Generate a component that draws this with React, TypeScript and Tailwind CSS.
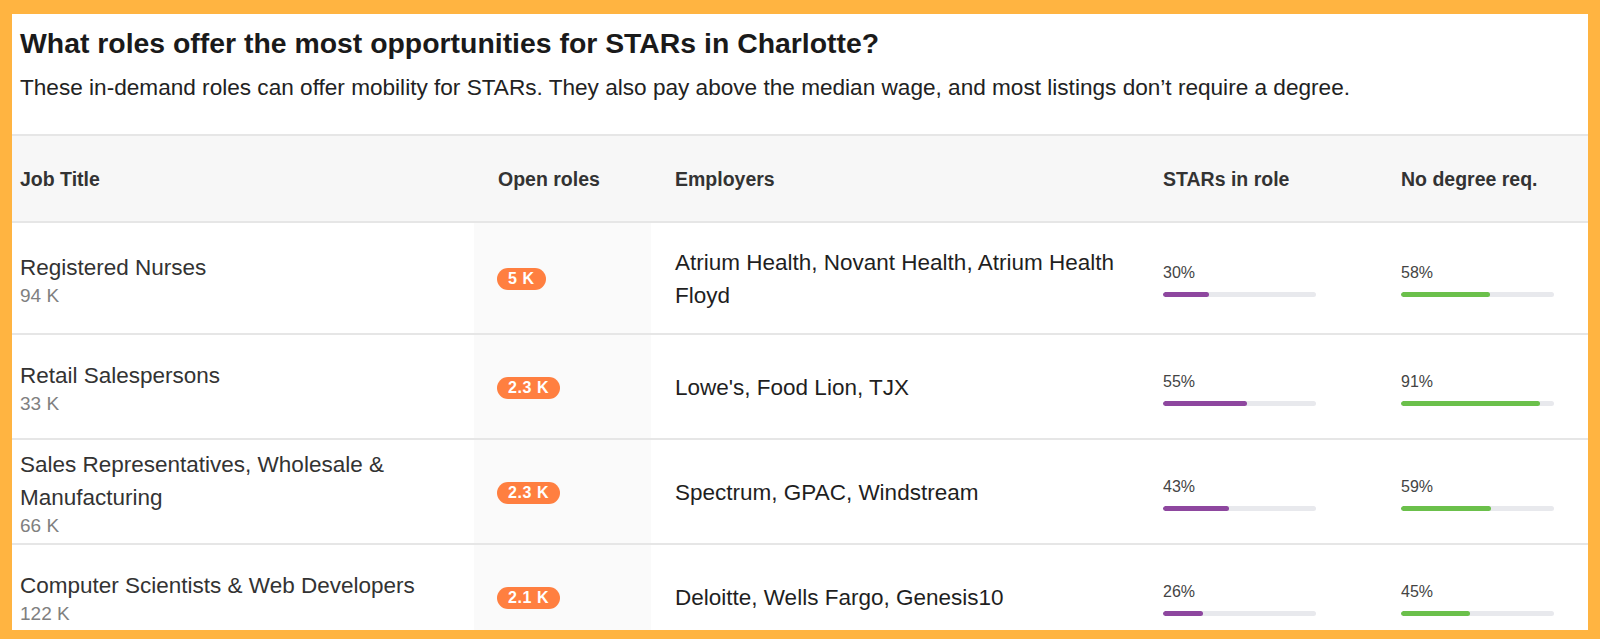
import React from "react";

type Row = {
  title: string;
  count: string;
  open: string;
  employers: string;
  stars: number;
  nodeg: number;
  h: string;
};

const rows: Row[] = [
  { title: "Registered Nurses", count: "94 K", open: "5 K", employers: "Atrium Health, Novant Health, Atrium Health Floyd", stars: 30, nodeg: 58, h: "h-[112px]" },
  { title: "Retail Salespersons", count: "33 K", open: "2.3 K", employers: "Lowe's, Food Lion, TJX", stars: 55, nodeg: 91, h: "h-[105px]" },
  { title: "Sales Representatives, Wholesale & Manufacturing", count: "66 K", open: "2.3 K", employers: "Spectrum, GPAC, Windstream", stars: 43, nodeg: 59, h: "h-[105px]" },
  { title: "Computer Scientists & Web Developers", count: "122 K", open: "2.1 K", employers: "Deloitte, Wells Fargo, Genesis10", stars: 26, nodeg: 45, h: "h-[105px]" },
];

function Bar({ value, color }: { value: number; color: string }) {
  return (
    <div className="flex flex-col">
      <div className="text-[16px] leading-[20px] text-[#444]">{value}%</div>
      <div className="mt-[9px] h-[5px] w-[153px] overflow-hidden rounded-full bg-[#e8e9ed]">
        <div className={`h-full rounded-full ${color}`} style={{ width: `${value}%` }} />
      </div>
    </div>
  );
}

export default function App() {
  return (
    <div
      className="h-[639px] w-[1600px] bg-[#FFB441] px-[12px] pt-[14px]"
      style={{ fontFamily: '"Liberation Sans", Arial, Helvetica, sans-serif' }}
    >
      <div className="h-[616px] overflow-hidden bg-white">
        <div className="pl-[8px] pt-[13px]">
          <h1 className="text-[28.4px] font-bold leading-[32px] text-[#1a1a1a]">
            What roles offer the most opportunities for STARs in Charlotte?
          </h1>
          <p className="mt-[14px] text-[22.6px] leading-[30px] text-[#222]">
            These in-demand roles can offer mobility for STARs. They also pay above the median wage, and most listings don’t require a degree.
          </p>
        </div>

        <div className="mt-[31px] grid h-[89px] grid-cols-[462px_177px_488px_238px_211px] items-center border-y-2 border-[#e6e6e6] bg-[#f7f7f7] pt-[2px] text-[19.5px] font-bold text-[#333]">
          <div className="pl-[8px]">Job Title</div>
          <div className="pl-[24px]">Open roles</div>
          <div className="pl-[24px]">Employers</div>
          <div className="pl-[24px]">STARs in role</div>
          <div className="pl-[24px]">No degree req.</div>
        </div>

        {rows.map((r) => (
          <div
            key={r.title}
            className={`grid ${r.h} grid-cols-[462px_177px_488px_238px_211px] border-b-2 border-[#e6e6e6]`}
          >
            <div className="flex flex-col justify-center pl-[8px] pr-[8px] pt-[2px]">
              <div className="text-[22.5px] leading-[33px] text-[#333]">{r.title}</div>
              <div className="text-[19px] leading-[24px] text-[#808080]">{r.count}</div>
            </div>
            <div className="flex items-center bg-[#fafafa] pl-[23px] pt-[2px]">
              <span className="inline-flex h-[22px] items-center rounded-full bg-[#ff7f40] px-[11px] text-[16px] font-bold leading-none tracking-[0.6px] text-white">
                {r.open}
              </span>
            </div>
            <div className="flex items-center pl-[24px] pr-[16px] pt-[2px]">
              <div className="text-[22.5px] leading-[33px] text-[#1f1f1f]">{r.employers}</div>
            </div>
            <div className="flex items-center pl-[24px] pt-[4px]">
              <Bar value={r.stars} color="bg-[#8e479f]" />
            </div>
            <div className="flex items-center pl-[24px] pt-[4px]">
              <Bar value={r.nodeg} color="bg-[#6bc04b]" />
            </div>
          </div>
        ))}
      </div>
    </div>
  );
}
